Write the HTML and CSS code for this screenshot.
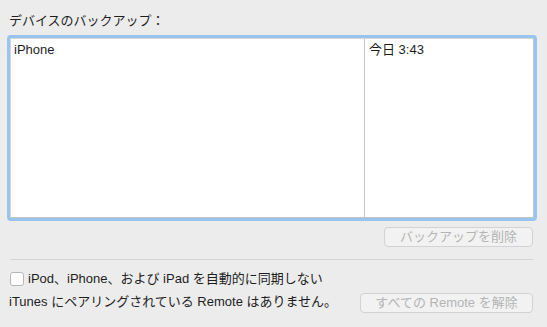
FILE: index.html
```html
<!DOCTYPE html>
<html lang="ja">
<head>
<meta charset="UTF-8">
<title>デバイス</title>
<link rel="stylesheet" href="styles.css">
</head>
<body>
<div class="pane">
    <div class="label">デバイスのバックアップ：</div>

    <div class="ring">
        <div class="table">
            <div class="col name">iPhone</div>
            <div class="col date">今日 3:43</div>
        </div>
    </div>

    <div class="row right">
        <button class="btn del">バックアップを削除</button>
    </div>

    <div class="sep"></div>

    <label class="check">
        <span class="box"></span>
        <span>iPod、iPhone、および iPad を自動的に同期しない</span>
    </label>

    <div class="row remote">
        <span class="msg">iTunes にペアリングされている Remote はありません。</span>
        <button class="btn unpair">すべての Remote を解除</button>
    </div>
</div>
</body>
</html>
```

FILE: styles.css
```css
html, body {
    margin: 0;
    padding: 0;
    background-color: #ececec;
}
body {
    font-family: "Liberation Sans", "Noto Sans CJK JP", sans-serif;
    font-size: 13px;
    color: #1e1e1e;
}
.pane {
    width: 547px;
    height: 327px;
    padding: 12px 0 0 0;
    box-sizing: border-box;
}
.label {
    margin-left: 9px;
    height: 17px;
    line-height: 17px;
}
.ring {
    margin: 6px 0 0 7px;
    width: 530px;
    height: 186px;
    box-sizing: border-box;
    padding: 3px;
    background-color: #9ac4f0;
    border-radius: 4px;
}
.table {
    display: flex;
    height: 100%;
    box-sizing: border-box;
    background-color: #fff;
    border: 1px solid #c4c4c4;
    border-top-color: #d6d6d6;
    border-left-color: #d6d6d6;
}
.col {
    padding: 3px 4px 3px 3px;
    line-height: 15px;
    box-sizing: border-box;
}
.name {
    width: 354px;
    border-right: 1px solid #c8c8c8;
}
.date {
    flex: 1;
    padding-left: 4px;
}
.row {
    display: flex;
    align-items: center;
}
.right {
    justify-content: flex-end;
    padding-right: 14px;
    margin-top: 6px;
}
.btn {
    font-family: "Liberation Sans", "Noto Sans CJK JP", sans-serif;
    font-size: 13px;
    color: #b4b4b4;
    background-color: #f2f2f2;
    border: 1px solid #d2d2d2;
    border-radius: 4px;
    height: 20px;
    padding: 0;
    line-height: 18px;
}
.del {
    width: 149px;
}
.sep {
    margin: 12px 14px 0 10px;
    height: 1px;
    background-color: #d4d4d4;
}
.check {
    display: flex;
    align-items: center;
    gap: 4px;
    margin: 12px 0 0 10px;
    height: 14px;
    line-height: 14px;
}
.box {
    width: 12px;
    height: 12px;
    background-color: #fff;
    border: 1px solid #b6b6b6;
    border-radius: 3px;
}
.remote {
    justify-content: space-between;
    margin-top: 7px;
    padding: 0 14px 0 9px;
}
.msg {
    margin-top: -6px;
}
.unpair {
    width: 173px;
}
```
